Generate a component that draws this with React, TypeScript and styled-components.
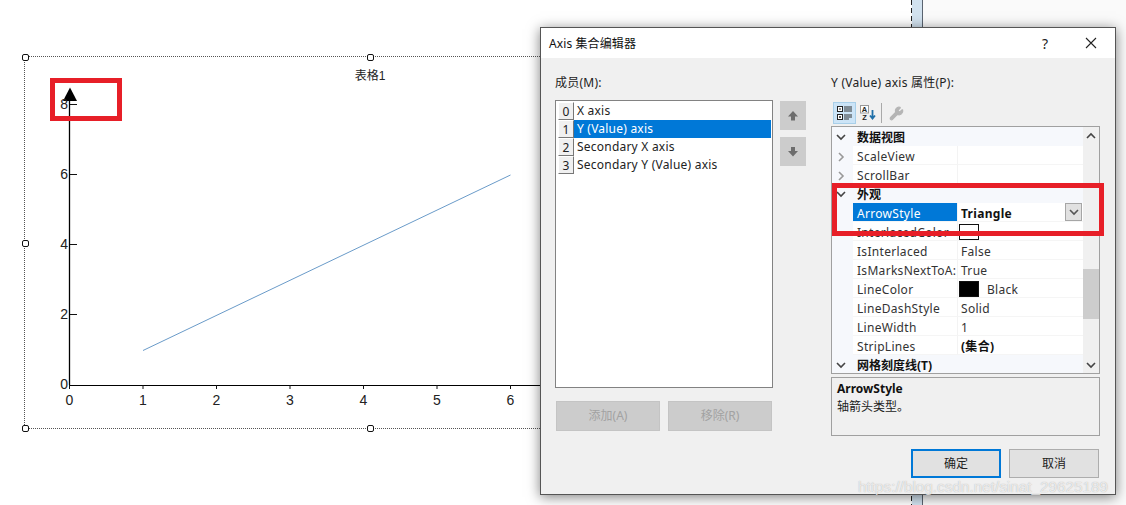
import React from "react";
import styled, { createGlobalStyle } from "styled-components";
import { Wrench } from "lucide-react";

const Global = createGlobalStyle`
  html, body { margin: 0; padding: 0; background: #fff; }
  * { box-sizing: border-box; }
  body { font-family: "Noto Sans", "Noto Sans CJK SC", sans-serif; font-size: 12px; color: #111; }
`;

const Stage = styled.div`
  position: relative;
  width: 1126px;
  height: 505px;
  overflow: hidden;
  background: #fff;
`;

const SidePane = styled.div`
  position: absolute;
  left: 911px;
  top: 0;
  width: 215px;
  height: 505px;
  display: flex;
  background: #fafafa;
`;
const DashLine = styled.div`
  width: 1px;
  background: repeating-linear-gradient(to bottom, #222 0 5px, transparent 5px 8px);
`;
const BlueStrip = styled.div`
  width: 10px;
  background: #d2e2ef;
`;
const PaneEdge = styled.div`
  width: 1px;
  background: #5a6470;
`;

const Surface = styled.div`
  position: absolute;
  left: 25px;
  top: 57px;
  width: 690px;
  height: 371px;
  outline: 1px dotted #555;
`;
const ChartSvg = styled.svg`
  display: block;
  width: 100%;
  height: 100%;
  font-family: "Liberation Sans", "Noto Sans CJK SC", sans-serif;
  font-size: 14px;
  fill: #222;
`;
const ChartTitle = styled.text`
  font-size: 12px;
`;
const Handle = styled.i<{ $x: number; $y: number }>`
  position: absolute;
  left: ${(p) => p.$x}px;
  top: ${(p) => p.$y}px;
  width: 7px;
  height: 7px;
  margin: -3px 0 0 -3px;
  background: #fff;
  border: 1px solid #111;
  border-radius: 2px;
`;

const RedBox = styled.div<{ $x: number; $y: number; $w: number; $h: number }>`
  position: absolute;
  left: ${(p) => p.$x}px;
  top: ${(p) => p.$y}px;
  width: ${(p) => p.$w}px;
  height: ${(p) => p.$h}px;
  border: 5px solid #e71f28;
`;

const Dialog = styled.div`
  position: absolute;
  left: 540px;
  top: 27px;
  width: 576px;
  height: 468px;
  display: flex;
  flex-direction: column;
  background: #f0f0f0;
  border: 1px solid #555;
  box-shadow: 0 2px 12px rgba(0, 0, 0, 0.5);
`;
const TitleBar = styled.div`
  height: 30px;
  flex: none;
  display: flex;
  align-items: center;
  padding: 0 18px 0 8px;
  background: #fff;
  letter-spacing: 0.1px;
`;
const TitleText = styled.span`
  flex: 1;
`;
const HelpGlyph = styled.span`
  font-size: 14px;
  width: 36px;
  margin-right: 7px;
  color: #222;
`;
const Body = styled.div`
  flex: 1;
  display: flex;
  padding: 17px 14px 0;
`;
const LeftCol = styled.div`
  width: 218px;
  display: flex;
  flex-direction: column;
`;
const Label = styled.div`
  height: 16px;
  line-height: 16px;
  color: #222;
  letter-spacing: 0.25px;
`;
const MemberList = styled.div`
  margin-top: 9px;
  height: 288px;
  padding: 1px;
  border: 1px solid #828282;
  background: #fff;
`;
const MemberRow = styled.div`
  height: 18px;
  display: flex;
  margin-left: 1px;
`;
const IndexCell = styled.div`
  width: 16px;
  height: 18px;
  text-align: center;
  line-height: 17px;
  background: #f0f0f0;
  border: 1px solid;
  border-color: #fff #777 #777 #fff;
  color: #222;
`;
const MemberName = styled.div<{ $sel?: boolean }>`
  flex: 1;
  padding-left: 3px;
  line-height: 17px;
  letter-spacing: 0.22px;
  background: ${(p) => (p.$sel ? "#0078d7" : "transparent")};
  color: ${(p) => (p.$sel ? "#fff" : "#222")};
`;
const LeftButtons = styled.div`
  display: flex;
  gap: 8px;
  margin-top: 13px;
  padding: 0 1px;
`;
const DisabledBtn = styled.div`
  flex: 1;
  height: 30px;
  line-height: 27px;
  text-align: center;
  background: #cccccc;
  border: 1px solid #c4c4c4;
  color: #a2a2a2;
`;
const ArrowCol = styled.div`
  width: 26px;
  margin: 26px 25px 0 7px;
  display: flex;
  flex-direction: column;
  gap: 7px;
`;
const ArrowBtn = styled.div`
  height: 29px;
  display: flex;
  align-items: center;
  justify-content: center;
  background: #cccccc;
`;
const RightCol = styled.div`
  width: 269px;
  display: flex;
  flex-direction: column;
`;
const Toolbar = styled.div`
  height: 22px;
  margin-top: 11px;
  display: flex;
  align-items: center;
  padding-left: 2px;
`;
const ToolBtn = styled.div<{ $on?: boolean }>`
  width: 23px;
  height: 22px;
  display: flex;
  align-items: center;
  justify-content: center;
  background: ${(p) => (p.$on ? "#cce4f7" : "transparent")};
  border: 1px solid ${(p) => (p.$on ? "#a8cfe9" : "transparent")};
`;
const ToolSep = styled.div`
  width: 1px;
  height: 20px;
  margin: 0 3px 0 2px;
  background: #a9a9a9;
`;
const Grid = styled.div`
  position: relative;
  height: 248px;
  margin-top: 2px;
  display: flex;
  border: 1px solid #a0a0a0;
  background: #fff;
  overflow: hidden;
`;
const Rows = styled.div`
  width: 251px;
  flex: none;
  background: #f6f8fc;
`;
const CatRow = styled.div`
  height: 19px;
  display: grid;
  grid-template-columns: 21px 1fr;
  align-items: center;
  font-weight: 700;
  font-size: 12px;
  color: #111;
  padding-left: 4px;
  grid-auto-flow: column;
`;
const PropRow = styled.div`
  height: 19px;
  display: grid;
  grid-template-columns: 21px 104px 126px;
  align-items: center;
`;
const Gutter = styled.div`
  display: flex;
  align-items: center;
  padding: 2px 0 0 4px;
`;
const NameCell = styled.div<{ $sel?: boolean }>`
  height: 19px;
  line-height: 21px;
  padding-left: 4px;
  overflow: hidden;
  white-space: nowrap;
  letter-spacing: 0.3px;
  background: ${(p) => (p.$sel ? "#0078d7" : "#fff")};
  color: ${(p) => (p.$sel ? "#fff" : "#333")};
  border-bottom: 1px solid #f5f5f5;
`;
const ValueCell = styled.div<{ $bold?: boolean }>`
  height: 19px;
  display: flex;
  align-items: center;
  gap: 8px;
  padding: 2px 0 0 3px;
  background: #fff;
  font-weight: ${(p) => (p.$bold ? 700 : 400)};
  letter-spacing: 0.3px;
  color: ${(p) => (p.$bold ? "#111" : "#333")};
  border-left: 1px solid #f3f3f3;
  border-bottom: 1px solid #f5f5f5;
  white-space: nowrap;
`;
const ValueText = styled.span`
  flex: 1;
`;
const Swatch = styled.i<{ $fill: string }>`
  width: 20px;
  height: 16px;
  margin-left: -2px;
  flex: none;
  background: ${(p) => p.$fill};
  border: 1px solid #111;
`;
const DropBtn = styled.div`
  width: 17px;
  height: 18px;
  margin: -2px 1px 0 0;
  display: flex;
  align-items: center;
  justify-content: center;
  background: #e1e1e1;
  border: 1px solid #a6a6a6;
`;
const ScrollTrack = styled.div`
  flex: 1;
  position: relative;
  background: #f0f0f0;
`;
const ScrollEnd = styled.div<{ $bottom?: boolean }>`
  position: absolute;
  left: 0;
  right: 0;
  height: 17px;
  display: flex;
  align-items: center;
  justify-content: center;
  ${(p) => (p.$bottom ? "bottom: 0;" : "top: 0;")}
`;
const ScrollThumb = styled.div`
  position: absolute;
  left: 0;
  right: 0;
  top: 142px;
  height: 50px;
  background: #cdcdcd;
`;
const Desc = styled.div`
  height: 59px;
  margin-top: 3px;
  padding: 2px 5px;
  border: 1px solid #a0a0a0;
  line-height: 18px;
  color: #222;
`;
const DescTitle = styled.div`
  font-weight: 700;
  color: #111;
`;
const Footer = styled.div`
  display: flex;
  justify-content: flex-end;
  gap: 8px;
  margin-top: 13px;
  margin-right: 1px;
`;
const DlgBtn = styled.div<{ $primary?: boolean }>`
  width: 90px;
  height: 29px;
  line-height: ${(p) => (p.$primary ? "25px" : "27px")};
  text-align: center;
  background: #e1e1e1;
  color: #222;
  border: ${(p) => (p.$primary ? "2px solid #0078d7" : "1px solid #adadad")};
`;
const Watermark = styled.div`
  position: absolute;
  left: 858px;
  top: 476px;
  font-family: "Liberation Sans", sans-serif;
  font-size: 15.3px;
  line-height: 22px;
  white-space: nowrap;
  color: rgba(255, 255, 255, 0.72);
  text-shadow: 0 0 1px rgba(120, 120, 120, 0.6);
`;

const Chevron = ({ dir, color = "#555" }: { dir: "down" | "right" | "up"; color?: string }) => {
  const d = dir === "down" ? "M1 3l4 4 4-4" : dir === "up" ? "M1 7l4-4 4 4" : "M3 1l4 4-4 4";
  return (
    <svg width="10" height="10" viewBox="0 0 10 10" fill="none" stroke={color} strokeWidth="1.6">
      <path d={d} />
    </svg>
  );
};

const BlockArrow = ({ up }: { up?: boolean }) => (
  <svg width="12" height="12" viewBox="0 0 12 12" fill="#6d6d6d">
    <path d={up ? "M6 1L11 6.5H8v4H4v-4H1z" : "M6 10.5L11 5H8V1H4v4H1z"} />
  </svg>
);

const CategorizedIcon = () => (
  <svg width="16" height="14" viewBox="0 0 16 14" fill="none">
    <rect x="0.5" y="0.5" width="5" height="5" fill="#fff" stroke="#222" />
    <rect x="0.5" y="8.5" width="5" height="5" fill="#fff" stroke="#222" />
    <path d="M2 3h2M2 11h2M3 10v2" stroke="#222" />
    <path d="M7 1h8M7 3h8M7 5h8M7 9h8M7 11h8M7 13h5" stroke="#333" />
  </svg>
);

const SortIcon = () => (
  <svg width="16" height="16" viewBox="0 0 16 16">
    <rect x="0.5" y="0.5" width="8" height="7.5" fill="#fff" stroke="#999" />
    <text x="4.5" y="7" textAnchor="middle" fontSize="7.5" fontWeight="700" fill="#222" fontFamily="Liberation Sans">A</text>
    <text x="4.5" y="15" textAnchor="middle" fontSize="7.5" fontWeight="700" fill="#222" fontFamily="Liberation Sans">Z</text>
    <path d="M12.5 5v8M10 10.5l2.5 3 2.5-3" fill="none" stroke="#1f6fa8" strokeWidth="1.8" />
  </svg>
);

const xTicks = [0, 1, 2, 3, 4, 5, 6];
const xPos = [69.5, 143, 216.5, 290, 363.5, 437, 510.5];
const yTicks: [string, number][] = [["8", 104], ["6", 174], ["4", 244], ["2", 314]];

type PropValue = { name: string; value?: string; bold?: boolean; sel?: boolean; swatch?: string; expand?: boolean; drop?: boolean };
type Item = { cat: string } | PropValue;

const items: Item[] = [
  { cat: "数据视图" },
  { name: "ScaleView", expand: true },
  { name: "ScrollBar", expand: true },
  { cat: "外观" },
  { name: "ArrowStyle", value: "Triangle", bold: true, sel: true, drop: true },
  { name: "InterlacedColor", swatch: "#fff" },
  { name: "IsInterlaced", value: "False" },
  { name: "IsMarksNextToA:", value: "True" },
  { name: "LineColor", value: "Black", swatch: "#000" },
  { name: "LineDashStyle", value: "Solid" },
  { name: "LineWidth", value: "1" },
  { name: "StripLines", value: "(集合)", bold: true },
  { cat: "网格刻度线(T)" },
];

const members = ["X axis", "Y (Value) axis", "Secondary X axis", "Secondary Y (Value) axis"];

export default function App() {
  return (
    <Stage>
      <Global />
      <SidePane>
        <DashLine />
        <BlueStrip />
        <PaneEdge />
      </SidePane>

      <Surface>
        <ChartSvg viewBox="25 57 690 371">
          <ChartTitle x="370" y="80" textAnchor="middle">表格1</ChartTitle>
          <line x1="69.5" y1="96" x2="69.5" y2="385" stroke="#000" strokeWidth="1.3" />
          <line x1="69" y1="385.5" x2="600" y2="385.5" stroke="#000" strokeWidth="1.2" />
          <path d="M70 87.5L77 101H63z" fill="#000" />
          {yTicks.map(([t, y]) => (
            <g key={t}>
              <line x1="70" y1={y + 0.5} x2="77" y2={y + 0.5} stroke="#111" />
              <text x="68" y={y + 5} textAnchor="end">{t}</text>
            </g>
          ))}
          <text x="68" y="389" textAnchor="end">0</text>
          {xTicks.map((t) => (
            <g key={t}>
              <line x1={xPos[t]} y1="385" x2={xPos[t]} y2="389" stroke="#111" />
              <text x={xPos[t]} y="405" textAnchor="middle">{t}</text>
            </g>
          ))}
          <line x1="143" y1="350.5" x2="510.5" y2="175" stroke="#6a9bc9" strokeWidth="1" />
        </ChartSvg>
        <Handle $x={0} $y={0} />
        <Handle $x={345} $y={0} />
        <Handle $x={0} $y={186} />
        <Handle $x={0} $y={371} />
        <Handle $x={345} $y={371} />
      </Surface>

      <RedBox $x={50} $y={78} $w={72} $h={43} />

      <Dialog>
        <TitleBar>
          <TitleText>Axis 集合编辑器</TitleText>
          <HelpGlyph>?</HelpGlyph>
          <svg width="12" height="12" viewBox="0 0 12 12" stroke="#222" strokeWidth="1.1">
            <path d="M1 1l10 10M11 1L1 11" />
          </svg>
        </TitleBar>
        <Body>
          <LeftCol>
            <Label>成员(M):</Label>
            <MemberList>
              {members.map((m, i) => (
                <MemberRow key={m}>
                  <IndexCell>{i}</IndexCell>
                  <MemberName $sel={i === 1}>{m}</MemberName>
                </MemberRow>
              ))}
            </MemberList>
            <LeftButtons>
              <DisabledBtn>添加(A)</DisabledBtn>
              <DisabledBtn>移除(R)</DisabledBtn>
            </LeftButtons>
          </LeftCol>
          <ArrowCol>
            <ArrowBtn><BlockArrow up /></ArrowBtn>
            <ArrowBtn><BlockArrow /></ArrowBtn>
          </ArrowCol>
          <RightCol>
            <Label>Y (Value) axis 属性(P):</Label>
            <Toolbar>
              <ToolBtn $on><CategorizedIcon /></ToolBtn>
              <ToolBtn><SortIcon /></ToolBtn>
              <ToolSep />
              <ToolBtn>
                <Wrench size={15} color="#b5b5b5" fill="#b5b5b5" />
              </ToolBtn>
            </Toolbar>
            <Grid>
              <Rows>
                {items.map((it) =>
                  "cat" in it ? (
                    <CatRow key={it.cat}>
                      <Chevron dir="down" color="#444" />
                      <span>{it.cat}</span>
                    </CatRow>
                  ) : (
                    <PropRow key={it.name}>
                      <Gutter>{it.expand && <Chevron dir="right" color="#999" />}</Gutter>
                      <NameCell $sel={it.sel}>{it.name}</NameCell>
                      <ValueCell $bold={it.bold}>
                        {it.swatch && <Swatch $fill={it.swatch} />}
                        <ValueText>{it.value}</ValueText>
                        {it.drop && (
                          <DropBtn><Chevron dir="down" color="#555" /></DropBtn>
                        )}
                      </ValueCell>
                    </PropRow>
                  )
                )}
              </Rows>
              <ScrollTrack>
                <ScrollEnd><Chevron dir="up" color="#444" /></ScrollEnd>
                <ScrollThumb />
                <ScrollEnd $bottom><Chevron dir="down" color="#444" /></ScrollEnd>
              </ScrollTrack>
            </Grid>
            <Desc>
              <DescTitle>ArrowStyle</DescTitle>
              <div>轴箭头类型。</div>
            </Desc>
            <Footer>
              <DlgBtn $primary>确定</DlgBtn>
              <DlgBtn>取消</DlgBtn>
            </Footer>
          </RightCol>
        </Body>
      </Dialog>

      <RedBox $x={832} $y={183} $w={272} $h={53} />
      <Watermark>https://blog.csdn.net/sinat_29625189</Watermark>
    </Stage>
  );
}
